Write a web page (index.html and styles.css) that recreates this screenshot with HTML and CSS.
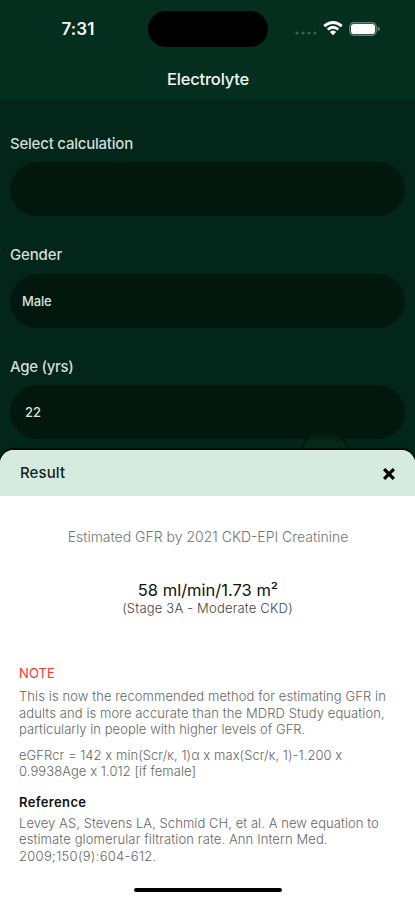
FILE: index.html
```html
<!DOCTYPE html>
<html lang="en">
<head>
<meta charset="utf-8">
<title>Electrolyte</title>
<link rel="stylesheet" href="styles.css">
</head>
<body>
<div class="phone">
  <header class="top">
    <div class="status">
      <span class="time">7:31</span>
      <span class="island"></span>
      <span class="indicators">
        <svg class="dots" width="22" height="4" viewBox="0 0 22 4"><circle cx="2" cy="2" r="1.6"/><circle cx="8" cy="2" r="1.6"/><circle cx="14" cy="2" r="1.6"/><circle cx="20" cy="2" r="1.6"/></svg>
        <svg class="wifi" width="20" height="15" viewBox="0 0 20 15"><path d="M1.2 5.2Q10-2.1 18.8 5.2M4.7 8.5Q10 4.1 15.3 8.5" fill="none" stroke="#fff" stroke-width="2.9"/><path d="M6.9 10.9Q10 8.3 13.1 10.9L10 14.2Z" fill="#fff"/></svg>
        <svg class="battery" width="32" height="14" viewBox="0 0 32 14"><rect x=".8" y=".8" width="26.4" height="12.4" rx="4" fill="none" stroke="#64806f" stroke-width="1.4"/><rect x="2" y="2" width="24" height="10" rx="2.8" fill="#fff"/><path d="M28.6 4.8Q31 5.4 31 7T28.6 9.2Z" fill="#64806f"/></svg>
      </span>
    </div>
    <h1 class="title">Electrolyte</h1>
  </header>
  <main class="form">
    <div class="field"><label class="label l-select">Select calculation</label><div class="input"></div></div>
    <div class="field"><label class="label l-gender">Gender</label><div class="input">Male</div></div>
    <div class="field"><label class="label l-age">Age (yrs)</label><div class="input number">22<span class="knob"></span></div></div>
  </main>
  <section class="sheet">
    <div class="sheet-head">
      <h2 class="sheet-title">Result</h2>
      <svg class="close" width="12" height="12" viewBox="0 0 12 12"><path d="M2.2 2.2L9.8 9.8M9.8 2.2L2.2 9.8" stroke="#000" stroke-width="3.2" stroke-linecap="square"/></svg>
    </div>
    <div class="sheet-body">
      <p class="method">Estimated GFR by 2021 CKD-EPI Creatinine</p>
      <p class="value">58 ml/min/1.73 m²</p>
      <p class="stage">(Stage 3A - Moderate CKD)</p>
      <h3 class="note">NOTE</h3>
      <p class="copy"><span class="a1">This is now the recommended method for estimating GFR in</span><br><span class="a2">adults and is more accurate than the MDRD Study equation,</span><br><span class="a3">particularly in people with higher levels of GFR.</span></p>
      <p class="copy formula"><span class="b1">eGFRcr = 142 x min(Scr/κ, 1)α x max(Scr/κ, 1)-1.200 x</span><br><span class="b2">0.9938Age x 1.012 [if female]</span></p>
      <h3 class="reference">Reference</h3>
      <p class="copy cite"><span class="c1">Levey AS, Stevens LA, Schmid CH, et al. A new equation to</span><br><span class="c2">estimate glomerular filtration rate. Ann Intern Med.</span><br><span class="c3">2009;150(9):604-612.</span></p>
    </div>
    <div class="home"></div>
  </section>
</div>
</body>
</html>
```
FILE: styles.css
```css
* { box-sizing: border-box; margin: 0; }
body { background: #022619; font-family: Inter, "Liberation Sans", sans-serif; }
.phone { width: 415px; height: 900px; overflow: hidden; display: flex; flex-direction: column; background: #022619; }
.top { height: 100px; flex: none; background: #042f1e; color: #f4f6f4; }
.status { height: 57px; display: grid; grid-template-columns: 148px 120px 1fr; align-items: center; }
.time { padding-left: 61.5px; font-size: 17px; line-height: 20px; font-weight: 600; letter-spacing: 0.1px; }
.island { height: 36px; border-radius: 18px; background: #000; }
.indicators { display: flex; align-items: center; padding-left: 27px; }
.dots { fill: #3f6150; margin-top: 9px; }
.wifi { margin-left: 6px; }
.battery { margin-left: 6px; }
.title { font-size: 16.5px; line-height: 20px; font-weight: 500; text-align: center; margin-top: 12px; padding-left: 1px; letter-spacing: -0.18px; }
.form { padding: 34px 10px 0; height: 350px; flex: none; }
.field { height: 111.5px; }
.label { display: block; font-size: 15px; line-height: 18px; font-weight: 500; color: #d5dcd7; }
.l-select { padding-top: 1px; height: 18px; letter-spacing: -0.22px; }
.l-gender { letter-spacing: -0.15px; }
.l-age { padding-top: 1px; height: 18px; letter-spacing: -0.3px; }
.input { margin-top: 10px; height: 54px; border-radius: 27px; background: #02180f; color: #dbe0dc; padding-left: 12px; font-size: 13px; line-height: 54px; font-weight: 500; letter-spacing: -0.15px; position: relative; }
.number { padding-left: 15px; letter-spacing: 0; }
.knob { position: absolute; left: 290px; top: 45px; width: 50px; height: 50px; border-radius: 50%; background: linear-gradient(#02180f, #07291c 12px); border: 2px solid #02170f; }
.sheet { position: relative; height: 450px; flex: none; background: #fff; border-radius: 14px 14px 0 0; box-shadow: 0 -2px 1px #000c07; }
.sheet-head { height: 46px; display: flex; align-items: center; justify-content: space-between; padding: 0 20px; background: #d5ebdf; border-radius: 14px 14px 0 0; }
.sheet-title { font-size: 15px; line-height: 18px; font-weight: 500; letter-spacing: 0.1px; color: #15231b; }
.close { margin-top: 1px; }
.sheet-body { padding: 32px 19px 0; }
.method { text-align: center; font-size: 14px; line-height: 18px; font-weight: 300; color: #737373; padding-left: 1px; }
.value { text-align: center; margin-top: 34px; font-size: 16.5px; line-height: 20px; font-weight: 400; color: #111; padding-left: 1px; }
.stage { text-align: center; font-size: 13px; line-height: 16px; font-weight: 300; letter-spacing: 0.19px; color: #444; }
.note { margin-top: 49px; font-size: 13px; line-height: 16px; font-weight: 400; letter-spacing: 0.1px; color: #f33; }
.copy { margin-top: 7px; font-size: 13px; line-height: 16.5px; font-weight: 300; color: #666; white-space: nowrap; }
.a1 { letter-spacing: 0.09px; }
.a2 { letter-spacing: 0.1px; }
.a3 { letter-spacing: 0.04px; }
.b1 { letter-spacing: 0.055px; }
.b2 { letter-spacing: 0.07px; }
.c1 { letter-spacing: 0.06px; }
.c2 { letter-spacing: 0.115px; }
.c3 { letter-spacing: 0.3px; }
.formula { margin-top: 9px; }
.reference { margin-top: 14px; font-size: 13px; line-height: 16px; font-weight: 600; letter-spacing: 0.35px; color: #111; }
.cite { margin-top: 5px; }
.home { width: 148px; height: 4px; border-radius: 2px; background: #000; position: absolute; left: 134px; top: 438px; }
```
